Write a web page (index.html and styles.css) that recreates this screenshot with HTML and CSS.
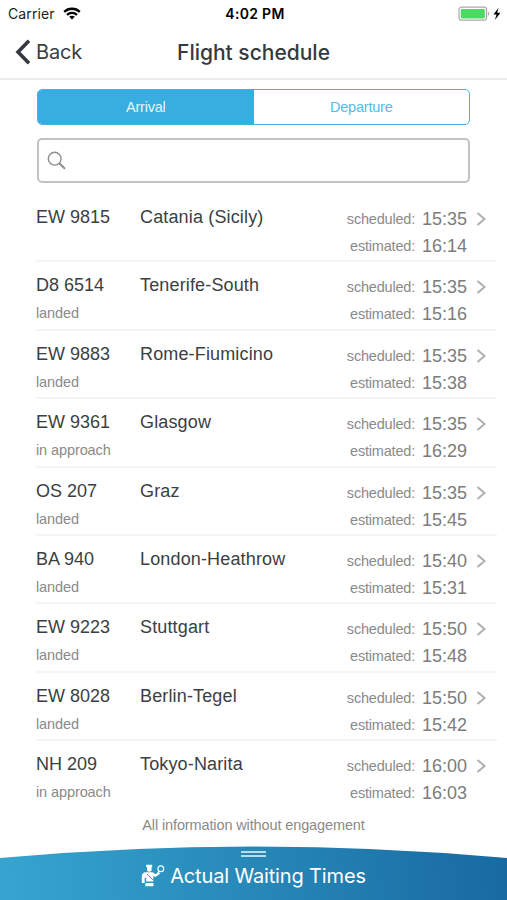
FILE: index.html
```html
<!DOCTYPE html>
<html lang="en">
<head>
    <meta charset="UTF-8">
    <meta name="viewport" content="width=device-width, initial-scale=1.0">
    <title>Flight schedule</title>
    <link rel="stylesheet" href="styles.css">
</head>
<body>

    <div class="status-bar">
        <div class="carrier">
            <span>Carrier</span>
            <svg width="18" height="13" viewBox="0 0 18 13" fill="none" stroke="#000" stroke-width="2.3">
                <path d="M1.2 4.8C5.5.7 12.5.7 16.8 4.8"/>
                <path d="M4 7.8c2.8-2.6 7.2-2.6 10 0"/>
                <path d="M9 12.6L6.2 9.8c1.6-1.4 4-1.4 5.6 0z" fill="#000" stroke="none"/>
            </svg>
        </div>
        <div class="clock">4:02 PM</div>
        <div class="battery">
            <svg width="44" height="16" viewBox="0 0 44 16">
                <rect x="1" y="1.2" width="27.6" height="13" rx="2.5" fill="#fff" stroke="#aaa" stroke-width="1.2"/>
                <rect x="2.8" y="3" width="24" height="9.4" rx="1" fill="#4cd964"/>
                <path d="M30 5.6c1.6.6 1.6 3.6 0 4.2z" fill="#aaa"/>
                <path d="M40.5 1.8L35.5 8.5h3l-1.6 5.5 5.6-7.2h-3.3z" fill="#000"/>
            </svg>
        </div>
    </div>

    <div class="nav-bar">
        <a class="back">
            <svg width="16" height="26" viewBox="0 0 16 26" fill="none" stroke="#343a40" stroke-width="3.6">
                <path d="M14 1.8L3 13l11 11.2"/>
            </svg>
            <span>Back</span>
        </a>
        <h1>Flight schedule</h1>
    </div>

    <div class="tabs">
        <div class="tab active">Arrival</div>
        <div class="tab">Departure</div>
    </div>

    <div class="search">
        <svg width="20" height="20" viewBox="0 0 20 20" fill="none" stroke="#8c8c8c">
            <circle cx="7.7" cy="7.7" r="6.4" stroke-width="1.4"/>
            <path d="M12.3 12.3l5.7 5.5" stroke-width="2"/>
        </svg>
    </div>

    <div class="flights" id="flights"></div>

    <p class="note">All information without engagement</p>

    <div class="waiting">
        <svg class="curve" width="507" height="55" viewBox="0 0 507 55" preserveAspectRatio="none">
            <defs>
                <linearGradient id="blue" gradientUnits="userSpaceOnUse" x1="0" y1="40" x2="507" y2="0">
                    <stop offset="0" stop-color="#36a5cf"/>
                    <stop offset="0.5" stop-color="#2788b8"/>
                    <stop offset="1" stop-color="#1869a2"/>
                </linearGradient>
            </defs>
            <path d="M0 13Q253.5 -10 507 13V55H0z" fill="url(#blue)"/>
        </svg>
        <div class="handle"></div>
        <div class="waiting-label">
            <svg width="24" height="24" viewBox="0 0 24 24" fill="#fff">
                <path d="M5.2.8h6v2.3h-.6v2.6c0 1.2-1 2-2.3 2s-2.3-.8-2.3-2V3.100h-.8z"/>
                <path d="M4.5 8.300h7.200l2.600 1.900 3.500-2.100 1.300 1.700-4.800 3.300-2-.8v5.200H5.200v-4.300l-1.500 1.300v4.400H.8v-6.500c0-2.400 1.500-4.100 3.700-4.100z"/>
                <path d="M5.2 19h7.300v3.300H4.300v-2.500z"/>
                <path d="M6 10l6 6" stroke="#2b8fbd" stroke-width=".9"/>
                <circle cx="19.8" cy="4.700" r="2.900" fill="none" stroke="#fff" stroke-width="1.200"/>
                <path d="M18 7l-1.400 3" stroke="#fff" stroke-width="1.300"/>
            </svg>
            <span>Actual Waiting Times</span>
        </div>
    </div>

    <script src="script.js"></script>
</body>
</html>
```

FILE: styles.css
```css
* {
    box-sizing: border-box;
}
body {
    margin: 0;
    height: 900px;
    display: flex;
    flex-direction: column;
    overflow: hidden;
    background-color: #fff;
    color: #3a3f44;
    font-family: "Liberation Sans", Arial, sans-serif;
}
svg {
    display: block;
    flex-shrink: 0;
}
.status-bar {
    display: grid;
    grid-template-columns: 1fr auto 1fr;
    align-items: center;
    height: 27px;
    padding: 0 5px 0 8px;
    font-family: Inter, sans-serif;
    font-size: 14px;
    color: #222;
}
.carrier {
    display: flex;
    align-items: center;
    gap: 8px;
    letter-spacing: 0.1px;
}
.clock {
    font-weight: 600;
    letter-spacing: 0.3px;
    color: #000;
}
.battery {
    justify-self: end;
}
.nav-bar {
    display: grid;
    grid-template-columns: 1fr auto 1fr;
    align-items: center;
    height: 53px;
    padding: 1px 15px 2px;
    border-bottom: 2px solid #ececec;
    font-family: Inter, sans-serif;
}
.back {
    display: flex;
    align-items: center;
    gap: 5px;
    font-size: 20px;
    letter-spacing: -0.2px;
}
.nav-bar h1 {
    margin: 0;
    font-size: 21px;
    font-weight: 500;
    color: #343a40;
}
.tabs {
    display: flex;
    height: 36px;
    margin: 9px 37px 0;
    border: 1.5px solid #45b2df;
    border-radius: 5px;
    overflow: hidden;
}
.tab {
    flex: 1;
    display: flex;
    align-items: center;
    justify-content: center;
    font-size: 14.5px;
    letter-spacing: -0.2px;
    color: #5bbbe2;
}
.tab.active {
    background-color: #38addf;
    color: #e6f6fd;
}
.search {
    height: 45px;
    margin: 13px 37px 0;
    padding: 11px 8px;
    border: 2px solid #c2c2c2;
    border-radius: 5px;
}
.flights {
    margin: 11px 10px 0 36px;
}
.flight {
    display: grid;
    grid-template-columns: 104px 1fr 76px 52px 30px;
    grid-template-rows: 27px 27px;
    height: 68.4px;
    padding-top: 12px;
    border-bottom: 2px solid #f5f5f5;
    line-height: 27px;
}
.flight:last-child {
    border-bottom-color: transparent;
}
.number,
.city {
    font-size: 18px;
    line-height: 23px;
}
.city {
    letter-spacing: 0.15px;
}
.state {
    grid-column: 1 / 3;
    font-size: 14.5px;
    line-height: 25px;
    letter-spacing: -0.1px;
    color: #8a8a8a;
}
.label {
    font-size: 14.5px;
    letter-spacing: -0.2px;
    text-align: right;
    color: #8a8a8a;
}
.time {
    font-size: 18px;
    text-align: right;
    color: #7c7c7c;
}
.arrow {
    padding: 4px 0 0 9px;
}
.note {
    margin: 5px 0 0;
    text-align: center;
    font-size: 14.5px;
    letter-spacing: -0.12px;
    line-height: 20px;
    color: #8a8a8a;
}
.waiting {
    position: relative;
    height: 55px;
    margin-top: auto;
    display: flex;
    flex-direction: column;
    align-items: center;
}
.curve {
    position: absolute;
    left: 0;
    top: 0;
    width: 100%;
}
.handle {
    position: relative;
    width: 25px;
    height: 6px;
    margin-top: 6px;
    border: solid #b9dceb;
    border-width: 2px 0;
}
.waiting-label {
    position: relative;
    display: flex;
    align-items: center;
    gap: 5px;
    margin-top: 6px;
    font-family: Inter, sans-serif;
    font-size: 20px;
    letter-spacing: -0.15px;
    line-height: 26px;
    color: #fff;
}
```

FILE: script.js
```js
const flights = [
    ["EW 9815", "Catania (Sicily)", "", "15:35", "16:14"],
    ["D8 6514", "Tenerife-South", "landed", "15:35", "15:16"],
    ["EW 9883", "Rome-Fiumicino", "landed", "15:35", "15:38"],
    ["EW 9361", "Glasgow", "in approach", "15:35", "16:29"],
    ["OS 207", "Graz", "landed", "15:35", "15:45"],
    ["BA 940", "London-Heathrow", "landed", "15:40", "15:31"],
    ["EW 9223", "Stuttgart", "landed", "15:50", "15:48"],
    ["EW 8028", "Berlin-Tegel", "landed", "15:50", "15:42"],
    ["NH 209", "Tokyo-Narita", "in approach", "16:00", "16:03"]
];

document.getElementById("flights").innerHTML = flights.map(([number, city, state, scheduled, estimated]) => `
    <div class="flight">
        <span class="number">${number}</span>
        <span class="city">${city}</span>
        <span class="label">scheduled:</span>
        <span class="time">${scheduled}</span>
        <svg class="arrow" width="20" height="22" viewBox="0 0 11 15" fill="none" stroke="#b0b0b0" stroke-width="2">
            <path d="M1.5 1.5l7 6-7 6"/>
        </svg>
        <span class="state">${state}</span>
        <span class="label">estimated:</span>
        <span class="time">${estimated}</span>
    </div>
`).join("");
```
